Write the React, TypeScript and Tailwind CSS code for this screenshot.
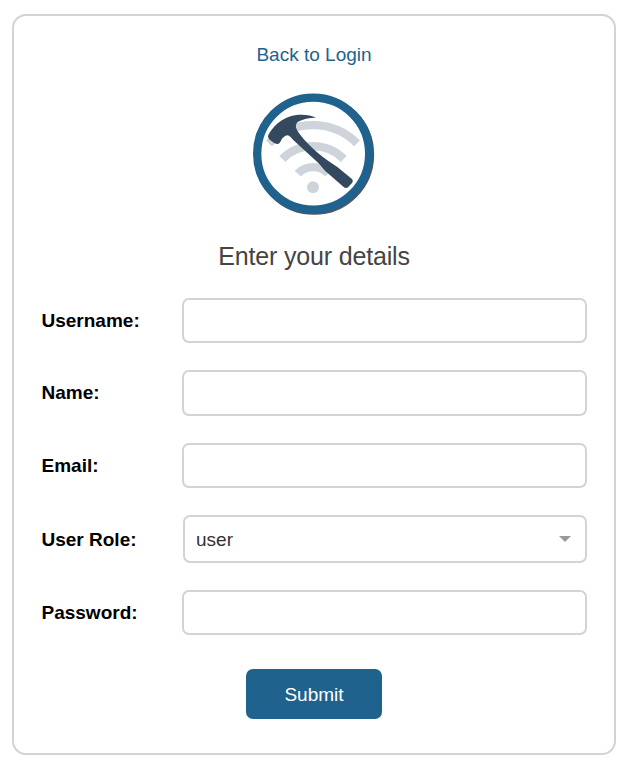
import React from "react";

function Logo() {
  return (
    <svg viewBox="0 0 420 420" className="ml-[229px] block h-[140px] w-[140px]" aria-hidden="true">
      <circle cx="213" cy="212" r="168" fill="none" stroke="#5c5552" strokeWidth="25" />
      <circle cx="210.5" cy="209" r="168" fill="#fff" stroke="#1f628e" strokeWidth="25" />
      <g fill="none" stroke="#ced4d9" strokeWidth="25">
        <path d="M78 178A187 187 0 0 1 342 178" />
        <path d="M118 225A129 129 0 0 1 302 225" />
        <path d="M164 269A64 64 0 0 1 256 269" />
      </g>
      <circle cx="210" cy="310" r="18" fill="#ced4d9" />
      <path
        d="M76 153C82 142 92 129 104 118C120 104 140 96 160 93C184 90 204 94 219 101C198 101 178 105 164 114C157 121 157 129 162 138C168 149 181 164 193 177C212 197 232 214 252 228C262 235 272 241 284 250L326 284Q332 290 327 297L315 310Q309 315 302 309L246 260C239 253 234 245 226 237L150 167C144 160 138 154 132 154C126 155 120 160 115 167C112 174 109 180 103 180C94 178 79 168 76 161Q74 157 76 153Z"
        fill="#34495e"
      />
    </svg>
  );
}

const box = "w-[405px] shrink-0 rounded-[7px] border-2 border-[#d3d3d3] bg-white outline-none";
const label = "w-[140.500px] shrink-0 text-[19px] leading-[22px] font-bold text-black";

export default function App() {
  return (
    <main className="h-[765px] w-[627px] overflow-hidden bg-white pt-[14px] pl-[12px] font-['Liberation_Sans',Arial,sans-serif]">
      <form className="flex h-[741px] w-[604px] flex-col rounded-[14px] border-2 border-[#d3d3d3]">
        <a href="#" className="mt-[28px] block text-center text-[19px] leading-[22px] text-[#1f628e]">
          Back to Login
        </a>
        <div className="mt-[18px]">
          <Logo />
        </div>
        <h1 className="mt-[18px] text-center text-[25px] leading-[28px] tracking-[-0.16px] text-[#444]">Enter your details</h1>
        <div className="mt-[28px] flex flex-col gap-[27px] pl-[27.500px]">
          <div className="flex items-center">
            <label htmlFor="username" className={label}>Username:</label>
            <input id="username" className={`${box} h-[45px]`} />
          </div>
          <div className="flex items-center">
            <label htmlFor="name" className={label}>Name:</label>
            <input id="name" className={`${box} h-[46px]`} />
          </div>
          <div className="flex items-center">
            <label htmlFor="email" className={label}>Email:</label>
            <input id="email" type="email" className={`${box} h-[45px]`} />
          </div>
          <div className="flex items-center">
            <span className={`${label} mr-px pt-[2px]`}>User Role:</span>
            <button
              type="button"
              className="flex h-[48px] w-[404px] shrink-0 items-center justify-between rounded-[7px] border-2 border-[#d3d3d3] bg-white pr-[14px] pl-[11px] text-[19px] leading-[22px] text-[#333]"
            >
              <span className="pt-[2px]">user</span>
              <svg viewBox="0 0 12 6" className="h-[6px] w-[12px]" aria-hidden="true">
                <path d="M0 0H12L6 6Z" fill="#999" />
              </svg>
            </button>
          </div>
          <div className="flex items-center">
            <label htmlFor="password" className={label}>Password:</label>
            <input id="password" type="password" className={`${box} h-[45px]`} />
          </div>
        </div>
        <button
          type="submit"
          className="mt-[34px] h-[50px] w-[136px] self-center rounded-[7px] bg-[#1f628e] pt-[2px] text-[19px] leading-[22px] text-white"
        >
          Submit
        </button>
      </form>
    </main>
  );
}
